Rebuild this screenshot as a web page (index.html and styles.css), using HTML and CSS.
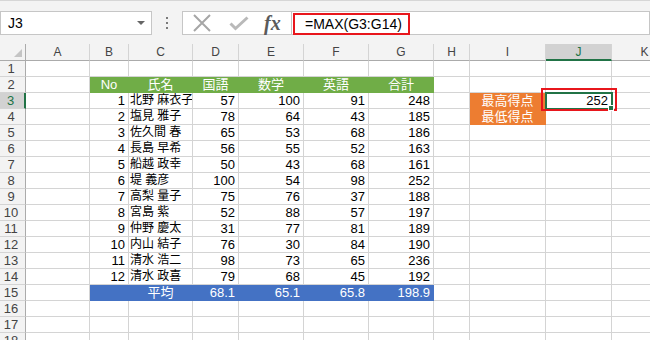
FILE: index.html
```
<!DOCTYPE html>
<html>
	<head>
		<meta charset="UTF-8">
		<title>MAX</title>
		<link rel="stylesheet" href="styles.css">
	</head>
	<body>
		<div class="topbar">
			<div class="namebox"><span>J3</span><i class="arrow"></i></div>
			<div class="grip"><i></i><i></i><i></i></div>
			<div class="fxbox">
				<svg class="ico-x" width="18" height="18" viewBox="0 0 18 18"><path d="M1 1L17 17M17 1L1 17" stroke="#a6a6a6" stroke-width="2" fill="none"/></svg>
				<svg class="ico-ok" width="20" height="15" viewBox="0 0 20 15"><path d="M1.5 7.5L6.5 12.5L18.5 1.5" stroke="#b9b9b9" stroke-width="3" fill="none"/></svg>
				<span class="fx">fx</span>
			</div>
			<div class="formula"><span class="ftext">=MAX(G3:G14)</span></div>
		</div>

		<div class="sheet">
			<div class="row head">
				<div class="corner"><i></i></div>
				<div class="ch">A</div><div class="ch">B</div><div class="ch">C</div><div class="ch">D</div><div class="ch">E</div>
				<div class="ch">F</div><div class="ch">G</div><div class="ch">H</div><div class="ch">I</div><div class="ch hl">J</div><div class="ch">K</div>
			</div>
			<div class="row">
				<div class="rh">1</div>
				<div class="c"></div><div class="c"></div><div class="c"></div><div class="c"></div><div class="c"></div>
				<div class="c"></div><div class="c"></div><div class="c"></div><div class="c"></div><div class="c"></div><div class="c"></div>
			</div>
			<div class="row">
				<div class="rh">2</div>
				<div class="c"></div>
				<div class="c g t">No</div><div class="c g t">氏名</div><div class="c g t">国語</div><div class="c g t">数学</div><div class="c g t">英語</div><div class="c g t">合計</div>
				<div class="c"></div><div class="c"></div><div class="c"></div><div class="c"></div>
			</div>
			<div class="row">
				<div class="rh hl">3</div>
				<div class="c"></div>
				<div class="c n">1</div><div class="c nm">北野 麻衣子</div><div class="c n">57</div><div class="c n">100</div><div class="c n">91</div><div class="c n">248</div>
				<div class="c"></div>
				<div class="c o t top">最高得点</div>
				<div class="c n sel">252<span class="redbox"></span><span class="handle"></span></div>
				<div class="c"></div>
			</div>
			<div class="row">
				<div class="rh">4</div>
				<div class="c"></div>
				<div class="c n">2</div><div class="c nm">塩見 雅子</div><div class="c n">78</div><div class="c n">64</div><div class="c n">43</div><div class="c n">185</div>
				<div class="c"></div>
				<div class="c o t">最低得点</div>
				<div class="c"></div><div class="c"></div>
			</div>
			<div class="row">
				<div class="rh">5</div>
				<div class="c"></div>
				<div class="c n">3</div><div class="c nm">佐久間 春</div><div class="c n">65</div><div class="c n">53</div><div class="c n">68</div><div class="c n">186</div>
				<div class="c"></div><div class="c"></div><div class="c"></div><div class="c"></div>
			</div>
			<div class="row">
				<div class="rh">6</div>
				<div class="c"></div>
				<div class="c n">4</div><div class="c nm">長島 早希</div><div class="c n">56</div><div class="c n">55</div><div class="c n">52</div><div class="c n">163</div>
				<div class="c"></div><div class="c"></div><div class="c"></div><div class="c"></div>
			</div>
			<div class="row">
				<div class="rh">7</div>
				<div class="c"></div>
				<div class="c n">5</div><div class="c nm">船越 政幸</div><div class="c n">50</div><div class="c n">43</div><div class="c n">68</div><div class="c n">161</div>
				<div class="c"></div><div class="c"></div><div class="c"></div><div class="c"></div>
			</div>
			<div class="row">
				<div class="rh">8</div>
				<div class="c"></div>
				<div class="c n">6</div><div class="c nm">堤 義彦</div><div class="c n">100</div><div class="c n">54</div><div class="c n">98</div><div class="c n">252</div>
				<div class="c"></div><div class="c"></div><div class="c"></div><div class="c"></div>
			</div>
			<div class="row">
				<div class="rh">9</div>
				<div class="c"></div>
				<div class="c n">7</div><div class="c nm">高梨 量子</div><div class="c n">75</div><div class="c n">76</div><div class="c n">37</div><div class="c n">188</div>
				<div class="c"></div><div class="c"></div><div class="c"></div><div class="c"></div>
			</div>
			<div class="row">
				<div class="rh">10</div>
				<div class="c"></div>
				<div class="c n">8</div><div class="c nm">宮島 紫</div><div class="c n">52</div><div class="c n">88</div><div class="c n">57</div><div class="c n">197</div>
				<div class="c"></div><div class="c"></div><div class="c"></div><div class="c"></div>
			</div>
			<div class="row">
				<div class="rh">11</div>
				<div class="c"></div>
				<div class="c n">9</div><div class="c nm">仲野 慶太</div><div class="c n">31</div><div class="c n">77</div><div class="c n">81</div><div class="c n">189</div>
				<div class="c"></div><div class="c"></div><div class="c"></div><div class="c"></div>
			</div>
			<div class="row">
				<div class="rh">12</div>
				<div class="c"></div>
				<div class="c n">10</div><div class="c nm">内山 結子</div><div class="c n">76</div><div class="c n">30</div><div class="c n">84</div><div class="c n">190</div>
				<div class="c"></div><div class="c"></div><div class="c"></div><div class="c"></div>
			</div>
			<div class="row">
				<div class="rh">13</div>
				<div class="c"></div>
				<div class="c n">11</div><div class="c nm">清水 浩二</div><div class="c n">98</div><div class="c n">73</div><div class="c n">65</div><div class="c n">236</div>
				<div class="c"></div><div class="c"></div><div class="c"></div><div class="c"></div>
			</div>
			<div class="row">
				<div class="rh">14</div>
				<div class="c"></div>
				<div class="c n">12</div><div class="c nm">清水 政喜</div><div class="c n">79</div><div class="c n">68</div><div class="c n">45</div><div class="c n">192</div>
				<div class="c"></div><div class="c"></div><div class="c"></div><div class="c"></div>
			</div>
			<div class="row">
				<div class="rh">15</div>
				<div class="c"></div>
				<div class="c b"></div><div class="c b t">平均</div><div class="c b n">68.1</div><div class="c b n">65.1</div><div class="c b n">65.8</div><div class="c b n">198.9</div>
				<div class="c"></div><div class="c"></div><div class="c"></div><div class="c"></div>
			</div>
			<div class="row">
				<div class="rh">16</div>
				<div class="c"></div><div class="c"></div><div class="c"></div><div class="c"></div><div class="c"></div>
				<div class="c"></div><div class="c"></div><div class="c"></div><div class="c"></div><div class="c"></div><div class="c"></div>
			</div>
			<div class="row">
				<div class="rh">17</div>
				<div class="c"></div><div class="c"></div><div class="c"></div><div class="c"></div><div class="c"></div>
				<div class="c"></div><div class="c"></div><div class="c"></div><div class="c"></div><div class="c"></div><div class="c"></div>
			</div>
			<div class="row">
				<div class="rh">18</div>
				<div class="c"></div><div class="c"></div><div class="c"></div><div class="c"></div><div class="c"></div>
				<div class="c"></div><div class="c"></div><div class="c"></div><div class="c"></div><div class="c"></div><div class="c"></div>
			</div>
		</div>
	</body>
</html>
```

FILE: styles.css
```
*{
	margin: 0;
	padding: 0;
	box-sizing: border-box;
}
body{
	width: 650px;
	height: 340px;
	overflow: hidden;
	background-color: #fff;
	font-family: "Liberation Sans", "Noto Sans CJK JP", sans-serif;
	color: #000;
}

/* formula bar */
.topbar{
	display: flex;
	align-items: flex-start;
	height: 44px;
	padding-top: 10px;
	border-top: 1px solid #d6d6d6;
	background-color: #f3f3f3;
}
.namebox{
	display: flex;
	align-items: center;
	justify-content: space-between;
	width: 152px;
	height: 24px;
	padding: 0 6px 0 7px;
	border: 1px solid #c6c6c6;
	background-color: #fff;
	font-size: 14px;
}
.arrow{
	width: 0;
	height: 0;
	border-left: 4px solid transparent;
	border-right: 4px solid transparent;
	border-top: 4px solid #666;
}
.grip{
	display: flex;
	flex-direction: column;
	align-items: center;
	justify-content: center;
	gap: 3px;
	width: 30px;
	height: 24px;
}
.grip i{
	width: 2px;
	height: 2px;
	background-color: #7a7a7a;
}
.fxbox{
	display: flex;
	align-items: center;
	width: 110px;
	height: 24px;
	padding-left: 10px;
	border: 1px solid #c6c6c6;
	background-color: #fff;
}
.ico-ok{
	margin-left: 18px;
}
.fx{
	margin-left: 15px;
	font-family: "Liberation Serif", serif;
	font-style: italic;
	font-weight: bold;
	font-size: 20px;
	line-height: 20px;
	color: #5a5a5a;
}
.formula{
	flex: 1;
	height: 24px;
	padding: 1px 0 0 1px;
	border: 1px solid #c6c6c6;
	border-left: 0;
	background-color: #fff;
}
.ftext{
	display: block;
	width: 117px;
	height: 22px;
	padding-left: 10px;
	border: 2px solid #e8161c;
	font-size: 14px;
	line-height: 18px;
}

/* sheet grid */
.row{
	display: grid;
	grid-template-columns: 26px 64px 39px 64px 46px 65px 65px 65px 36px 76px 66px 66px;
	height: 16px;
}
.row.head{
	height: 17px;
}
.c, .ch, .rh, .corner{
	border-right: 1px solid #d4d4d4;
	border-bottom: 1px solid #d4d4d4;
	white-space: nowrap;
	overflow: hidden;
	font-size: 13px;
	line-height: 15px;
}
.ch, .corner{
	border-bottom-color: #ababab;
	background-color: #f3f3f3;
	text-align: center;
	font-size: 12px;
	line-height: 16px;
	color: #444;
}
.corner{
	display: flex;
	align-items: flex-end;
	justify-content: flex-end;
	padding: 0 3px 3px 0;
	border-right-color: #ababab;
}
.corner i{
	width: 0;
	height: 0;
	border-left: 8px solid transparent;
	border-bottom: 8px solid #c4c4c4;
}
.rh{
	border-right-color: #ababab;
	background-color: #f3f3f3;
	padding-right: 3px;
	text-align: center;
	color: #444;
}
.ch.hl{
	background-color: #d2d2d2;
	border-bottom: 2px solid #217346;
	color: #217346;
}
.rh.hl{
	background-color: #d2d2d2;
	border-right: 2px solid #217346;
	color: #217346;
}

.n{
	padding-right: 3px;
	text-align: right;
}
.t{
	text-align: center;
}
.nm{
	padding-left: 1px;
	font-size: 12px;
}
.g{
	background-color: #70ad47;
	border-color: #70ad47;
	color: #fff;
}
.b{
	background-color: #4472c4;
	border-color: #4472c4;
	color: #fff;
}
.o{
	background-color: #ed7d31;
	border-color: #ed7d31;
	color: #fff;
}
.sel{
	position: relative;
	overflow: visible;
	outline: 2px solid #217346;
	outline-offset: -1px;
}
.redbox{
	position: absolute;
	left: -5px;
	top: -5px;
	width: 76px;
	height: 23px;
	border: 2px solid #e8161c;
}
.handle{
	position: absolute;
	right: -3px;
	bottom: -3px;
	width: 6px;
	height: 6px;
	background-color: #217346;
	border: 1px solid #fff;
}
```
